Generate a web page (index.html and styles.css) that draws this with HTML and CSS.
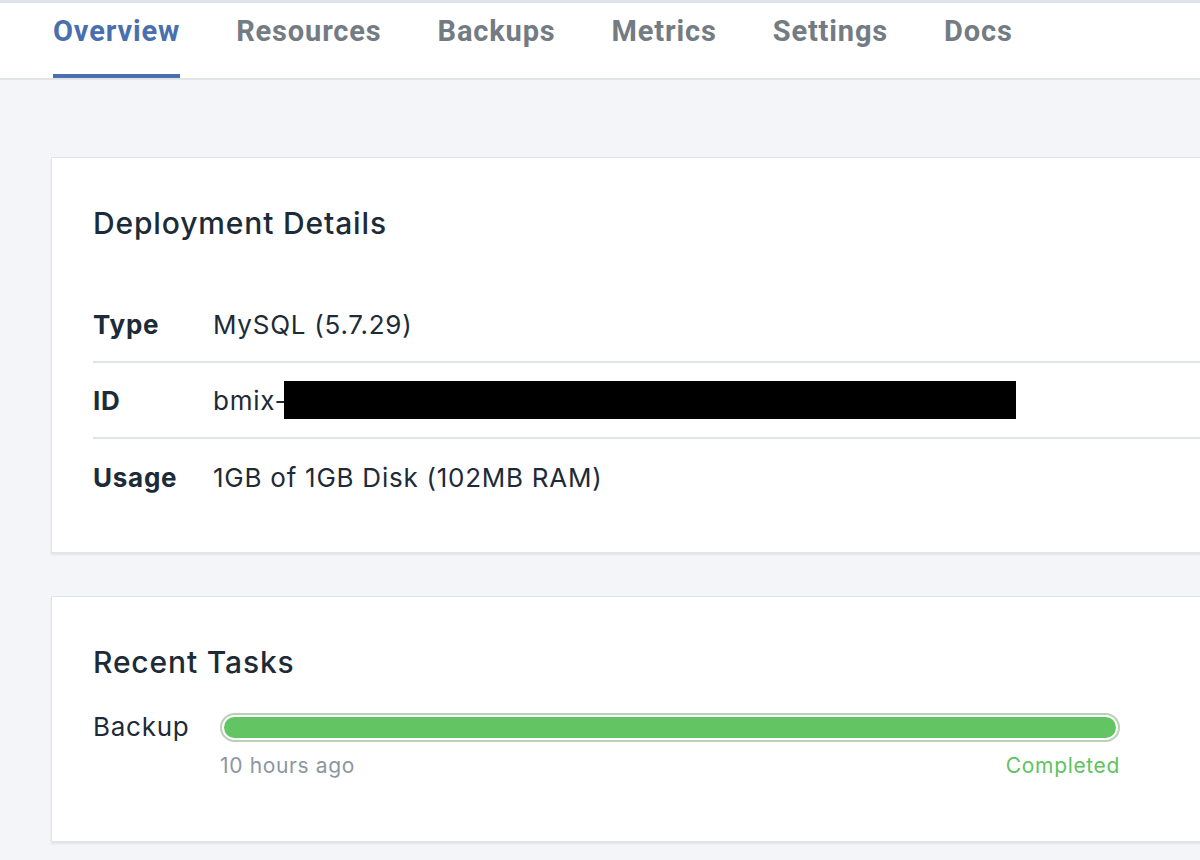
FILE: index.html
```html
<!DOCTYPE html>
<html>
<head>
<meta charset="utf-8">
<link rel="stylesheet" href="styles.css">
</head>
<body>
<header class="tabs">
  <nav class="tab-list">
    <a class="tab active">Overview</a>
    <a class="tab">Resources</a>
    <a class="tab">Backups</a>
    <a class="tab">Metrics</a>
    <a class="tab">Settings</a>
    <a class="tab">Docs</a>
  </nav>
</header>
<main class="content">
  <section class="card details">
    <h2 class="card-title">Deployment Details</h2>
    <div class="rows">
      <div class="row"><span class="label">Type</span><span class="value">MySQL (5.7.29)</span></div>
      <div class="row"><span class="label">ID</span><span class="value">bmix-<span class="redact"></span></span></div>
      <div class="row"><span class="label">Usage</span><span class="value">1GB of 1GB Disk (102MB RAM)</span></div>
    </div>
  </section>
  <section class="card tasks">
    <h2 class="card-title">Recent Tasks</h2>
    <div class="task">
      <span class="task-name">Backup</span>
      <div class="task-body">
        <div class="bar"><div class="fill"></div></div>
        <div class="task-meta"><span class="ago">10 hours ago</span><span class="status">Completed</span></div>
      </div>
    </div>
  </section>
</main>
</body>
</html>
```
FILE: styles.css
```css
* { box-sizing: border-box; }
html, body { margin: 0; padding: 0; }
body {
  background: #f4f5f9;
  font-family: Inter, "Liberation Sans", sans-serif;
  color: #1d2b38;
  width: 1200px;
  height: 860px;
  overflow: hidden;
}
.tabs {
  background: #fff;
  border-top: 3px solid #e2e3e8;
  border-bottom: 2px solid #e1e4e8;
  height: 80px;
}
.tab-list {
  display: flex;
  gap: 56px;
  padding-left: 53px;
  height: 100%;
}
.tab {
  font-family: Roboto, "Liberation Sans", sans-serif;
  font-weight: 700;
  font-size: 29px;
  letter-spacing: 0.85px;
  color: #737b83;
  line-height: 56px;
  height: 75px;
  border-bottom: 4px solid transparent;
}
.tab.active {
  color: #4a6fae;
  border-bottom-color: #4a6fae;
}
.content {
  padding: 77px 0 0 51px;
  display: flex;
  flex-direction: column;
  gap: 43px;
}
.card {
  background: #fff;
  border: 1px solid #e2e4e9;
  border-right: none;
  box-shadow: 0 2px 2px rgba(0, 0, 0, 0.07);
  width: 1160px;
  padding-left: 41px;
}
.card-title {
  margin: 0;
  font-size: 30px;
  font-weight: 500;
  line-height: 36px;
  letter-spacing: 0.85px;
  color: #1d2b38;
}
.details {
  padding-top: 47px;
  height: 396px;
}
.rows {
  margin-top: 46px;
}
.row {
  display: flex;
  align-items: center;
  height: 76px;
  font-size: 26px;
  letter-spacing: 0.75px;
  border-bottom: 2px solid #e0e3e7;
}
.row:last-child { border-bottom: none; }
.label {
  width: 120px;
  font-weight: 700;
}
.value {
  display: flex;
  align-items: center;
}
.redact {
  display: inline-block;
  width: 732px;
  height: 38px;
  margin-left: -3px;
  background: #000;
}
.tasks {
  padding-top: 47px;
  height: 246px;
}
.task {
  display: flex;
  margin-top: 33px;
}
.task-name {
  width: 127px;
  font-size: 26px;
  letter-spacing: 0.75px;
  line-height: 28px;
}
.task-body {
  width: 900px;
}
.bar {
  height: 29px;
  border: 2px solid #b8d2ba;
  border-radius: 15px;
  padding: 2px;
  background: #fff;
}
.fill {
  width: 100%;
  height: 100%;
  border-radius: 11px;
  background: #62c462;
}
.task-meta {
  display: flex;
  justify-content: space-between;
  margin-top: 11px;
  font-size: 21px;
  line-height: 26px;
  letter-spacing: 0.65px;
}
.ago { color: #8c96a1; }
.status { color: #5fc25f; }
```
